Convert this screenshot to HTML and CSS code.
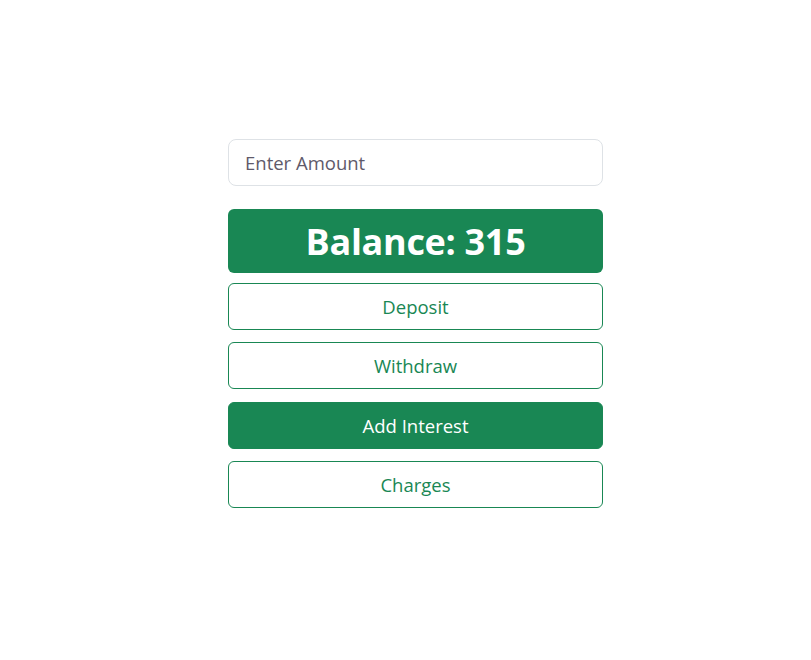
FILE: index.html
```html
<!DOCTYPE html>
<html>
<head>
<meta charset="utf-8">
<link rel="stylesheet" href="styles.css">
</head>
<body>
<main class="bank">
  <input class="amount" type="text" placeholder="Enter Amount">
  <div class="balance">Balance: 315</div>
  <div class="actions">
    <button class="btn outline">Deposit</button>
    <button class="btn outline">Withdraw</button>
    <button class="btn solid">Add Interest</button>
    <button class="btn outline">Charges</button>
  </div>
</main>
</body>
</html>
```
FILE: styles.css
```css
* { box-sizing: border-box; }
body {
  margin: 0;
  background: #fff;
  font-family: "Open Sans", "Noto Sans", sans-serif;
}
.bank {
  width: 375px;
  margin-left: 228px;
  padding-top: 139px;
  display: flex;
  flex-direction: column;
}
.amount {
  height: 47px;
  border: 1px solid #dee2e6;
  border-radius: 8px;
  padding: 0 16px;
  font-family: inherit;
  font-size: 18.5px;
  color: #212529;
  outline: none;
}
.amount::placeholder { color: #5f5a6a; }
.balance {
  margin-top: 23px;
  height: 64px;
  background: #198754;
  color: #fff;
  border-radius: 6px;
  display: flex;
  align-items: center;
  justify-content: center;
  font-size: 36px;
  font-weight: 700;
  letter-spacing: -0.3px;
}
.actions {
  margin-top: 10px;
  display: flex;
  flex-direction: column;
  gap: 12.33px;
}
.btn {
  height: 47px;
  border-radius: 6px;
  border: 1px solid #198754;
  font-family: inherit;
  font-size: 18.5px;
  cursor: pointer;
}
.outline { background: #fff; color: #198754; }
.solid { background: #198754; color: #fff; }
```
